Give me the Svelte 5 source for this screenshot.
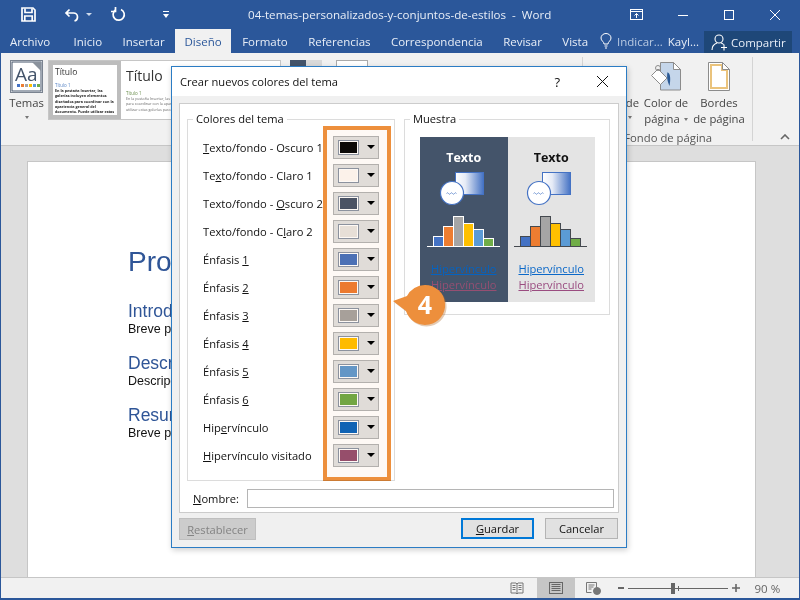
<script>
  const tabs = ['Archivo', 'Inicio', 'Insertar', 'Diseño', 'Formato', 'Referencias', 'Correspondencia', 'Revisar', 'Vista'];
  const rows = [
    { a: '', u: 'T', b: 'exto/fondo - Oscuro 1', c: '#0c0a08' },
    { a: 'Te', u: 'x', b: 'to/fondo - Claro 1', c: '#fdf8f4' },
    { a: 'Texto/fondo - ', u: 'O', b: 'scuro 2', c: '#4b5568' },
    { a: 'Texto/fondo - C', u: 'l', b: 'aro 2', c: '#e8e5e0' },
    { a: 'Énfasis ', u: '1', b: '', c: '#4b73bd' },
    { a: 'Énfasis ', u: '2', b: '', c: '#ed7d31' },
    { a: 'Énfasis ', u: '3', b: '', c: '#a8a4a0' },
    { a: 'Énfasis ', u: '4', b: '', c: '#ffc000' },
    { a: 'Énfasis ', u: '5', b: '', c: '#639ace' },
    { a: 'Énfasis ', u: '6', b: '', c: '#72aa45' },
    { a: 'Hip', u: 'e', b: 'rvínculo', c: '#0f64bc' },
    { a: '', u: 'H', b: 'ipervínculo visitado', c: '#97506f' }
  ];
  const bars = [
    { h: 10, c: '#4472c4' },
    { h: 20, c: '#ed7d31' },
    { h: 30, c: '#a5a5a5' },
    { h: 23, c: '#ffc000' },
    { h: 17, c: '#5b9bd5' },
    { h: 8, c: '#70ad47' }
  ];
  const panes = [
    { cls: 'dark', stroke: '#ffffff', id: 'g1' },
    { cls: 'light', stroke: '#44494f', id: 'g2' }
  ];
  const bodyText = 'En la pestaña Insertar, las galerías incluyen elementos diseñados para coordinar con la apariencia general del documento. Puede utilizar estas galerías para insertar tablas, encabezados, pies de';
</script>

<div class="word">
  <header class="titlebar">
    <div class="qat">
      <svg width="15" height="15" viewBox="0 0 15 15" fill="none" stroke="#fff" stroke-width="1.7"><path d="M1 1h11l2 2v11H1z"/><path d="M4 1.500v4h7v-4M3.800 14V9h7.400v5"/></svg>
      <svg class="undo" width="16" height="14" viewBox="0 0 16 14" fill="none" stroke="#fff" stroke-width="1.7"><path d="M5.500 1.500L2 5l3.500 3.500M2.500 5h7a4 4 0 0 1 4 4c0 2-1 3.500-3 4"/></svg>
      <i class="caret"></i>
      <svg class="redo" width="15" height="15" viewBox="0 0 15 15" fill="none" stroke="#fff" stroke-width="1.700"><path d="M4.500 3a5.600 5.600 0 1 0 5.500-.5"/><path d="M4.500 0v4.500H0"/></svg>
      <svg class="custom" width="7" height="8" viewBox="0 0 7 8" fill="#fff"><rect width="6" height="1" y="0"/><path d="M0 3h6L3 7z"/></svg>
    </div>
    <div class="doc-title">04-temas-personalizados-y-conjuntos-de-estilos&nbsp; -&nbsp; Word</div>
    <div class="winbtns">
      <svg class="opts" width="14" height="12" viewBox="0 0 14 12" fill="none" stroke="#fff"><rect x=".5" y=".5" width="12" height="10"/><path d="M.5 2.500h12M6.500 9V4.500M4.500 6.500l2-2 2 2"/></svg>
      <svg width="10" height="10" viewBox="0 0 10 10" stroke="#fff"><path d="M0 5.500h10"/></svg>
      <svg width="10" height="10" viewBox="0 0 10 10" fill="none" stroke="#fff"><rect x=".5" y=".5" width="9" height="9"/></svg>
      <svg width="10" height="10" viewBox="0 0 10 10" stroke="#fff"><path d="M0 0l10 10M10 0L0 10"/></svg>
    </div>
  </header>

  <nav class="tabs">
    {#each tabs as t}
      <span class="tab" class:active={t === 'Diseño'}>{t}</span>
    {/each}
    <span class="tell">
      <svg width="12" height="16" viewBox="0 0 12 16" fill="none" stroke="#fff"><path d="M4 11C4 8.500 1 8 1 5a5 4.500 0 0 1 10 0c0 3-3 3.500-3 6zM4.500 13h3M5 15h2"/></svg>
      <span>Indicar...</span>
    </span>
    <span class="user">Kayl...</span>
    <span class="share">
      <svg width="17" height="17" viewBox="0 0 17 17" fill="none" stroke="#fff" stroke-width="1.100"><circle cx="8" cy="5" r="4"/><path d="M1 16c0-4 2-6 5-7M10 9c1 .3 2 .8 2.500 1.500M10 13.500h6M13 10.500v6"/></svg>
      Compartir
    </span>
  </nav>

  <section class="ribbon">
    <div class="themes">
      <svg width="33" height="33" viewBox="0 0 33 33">
        <rect x=".5" y=".5" width="32" height="32" fill="#fff" stroke="#7a8390"/>
        <rect x="2" y="2" width="29" height="29" fill="#fff" stroke="#44546a"/>
        <path d="M22 2h9v9z" fill="#8a929c"/>
        <text x="5" y="21" class="aa">Aa</text>
        <rect x="7" y="24" width="3" height="3" fill="#4472c4"/><rect x="11" y="24" width="3" height="3" fill="#ed7d31"/><rect x="15" y="24" width="3" height="3" fill="#a5a5a5"/><rect x="19" y="24" width="3" height="3" fill="#ffc000"/><rect x="23" y="24" width="3" height="3" fill="#5b9bd5"/><rect x="27" y="24" width="3" height="3" fill="#70ad47"/>
      </svg>
      <span>Temas</span>
      <i class="mini-caret"></i>
    </div>
    <div class="gallery">
      <div class="thumb selected">
        <div class="t-title">Título</div>
        <div class="t-h blue">Título 1</div>
        <div class="t-body">{bodyText}</div>
      </div>
      <div class="thumb plain">
        <div class="t-title big">Título</div>
        <div class="t-h green">Título 1</div>
        <div class="t-body gray">{bodyText}</div>
      </div>
    </div>
    <div class="peek">
      <i class="sw"><b></b><b></b></i>
      <i class="bx"></i>
    </div>
    <div class="page-bg">
      <div class="sep"></div>
      <div class="group">
        <div class="pg-btns">
          <div class="pg-btn de">
            <span>de</span>
            <i class="mini-caret"></i>
          </div>
          <div class="pg-btn color">
            <svg width="32" height="29" viewBox="0 0 32 29">
              <path d="M10.500 .5h13l7 7v20.500h-20z" fill="#c5d6ea" stroke="#8c8c8c"/>
              <path d="M23.500 .5v7h7z" fill="#fff" stroke="#8c8c8c"/>
              <path d="M8 7l9 9-6.500 6.500-9-9z" fill="#fff" stroke="#8c8c8c"/>
              <path d="M17 10c4 1 3.500 8 2.500 14-2-5-3-8-2-14" fill="#2b5a95"/>
              <circle cx="8" cy="6" r="2.500" fill="none" stroke="#8c8c8c"/>
            </svg>
            <span>Color de</span>
            <span>página <i class="mini-caret inline"></i></span>
          </div>
          <div class="pg-btn borders">
            <svg width="22" height="29" viewBox="0 0 22 29">
              <path d="M.5 .5h14l7 7v21H.5z" fill="#fff" stroke="#8c8c8c"/>
              <path d="M3 3h11v5h5v18H3z" fill="none" stroke="#eac37c" stroke-width="2"/>
              <path d="M14.500 .5v7h7z" fill="#fff" stroke="#8c8c8c"/>
            </svg>
            <span>Bordes</span>
            <span>de página</span>
          </div>
        </div>
        <div class="group-name">Fondo de página</div>
      </div>
      <div class="sep right"></div>
      <svg class="collapse" width="10" height="6" viewBox="0 0 10 6" fill="none" stroke="#666" stroke-width="1.600"><path d="M1 5l4-4 4 4"/></svg>
    </div>
  </section>

  <main class="canvas">
    <article class="page">
      <h1>Propuesta</h1>
      <h2>Introducción</h2>
      <p>Breve párrafo</p>
      <h2>Descripción</h2>
      <p>Descripción</p>
      <h2>Resumen</h2>
      <p>Breve párrafo</p>
    </article>
  </main>

  <footer class="status">
    <svg width="14" height="13" viewBox="0 0 14 13" fill="none" stroke="#777"><path d="M1 1h5l1 1 1-1h5v10H8l-1 1-1-1H1zM7 2v9M2.500 3.500h3M2.500 5.500h3M2.500 7.500h3M8.500 3.500h3M8.500 5.500h3M8.500 7.500h3"/></svg>
    <span class="view-active">
      <svg width="14" height="12" viewBox="0 0 14 12" fill="none" stroke="#666"><rect x=".5" y=".5" width="13" height="11"/><path d="M2.500 2.500h9M2.500 4.500h9M2.500 6.500h9M2.500 8.500h9"/></svg>
    </span>
    <svg class="web" width="15" height="13" viewBox="0 0 15 13" fill="none" stroke="#777"><path d="M.5.5h10v5M.5.500v10h5M2.500 3h6M2.500 5h5M2.500 7h3"/><circle cx="11" cy="9" r="3.500" fill="#777"/></svg>
    <span class="zoom">
      <i class="minus"></i>
      <span class="track"><i class="thumb-z"></i><i class="tick"></i></span>
      <svg width="8" height="8" viewBox="0 0 8 8" stroke="#666" stroke-width="1.600"><path d="M0 4h8M4 0v8"/></svg>
    </span>
    <span class="pct">90 %</span>
  </footer>

  <div class="dialog">
    <div class="dlg-title">
      <span>Crear nuevos colores del tema</span>
      <span class="help">?</span>
      <svg width="11" height="11" viewBox="0 0 11 11" stroke="#111"><path d="M0 0l11 11M11 0L0 11"/></svg>
    </div>
    <div class="dlg-body">
      <div class="panel">
        <div class="fields">
          <fieldset class="colors">
            <legend>Colores del tema</legend>
            {#each rows as r}
              <div class="row">
                <span class="lbl">{r.a}<u>{r.u}</u>{r.b}</span>
                <span class="pick"><i class="chip" style="background:{r.c}"></i><i class="arrow"></i></span>
              </div>
            {/each}
          </fieldset>
          <fieldset class="sample">
            <legend>Muestra</legend>
            <div class="preview">
              {#each panes as p}
                <div class="pane {p.cls}">
                  <strong>Texto</strong>
                  <svg class="shapes" width="64" height="34" viewBox="0 0 64 34">
                    <defs>
                      <linearGradient id={p.id}><stop offset="0" stop-color="#fff"/><stop offset=".35" stop-color="#e6ebf6"/><stop offset="1" stop-color="#4472c4"/></linearGradient>
                    </defs>
                    <rect x="20.500" y=".5" width="28" height="22" fill="url(#{p.id})" stroke="#4472c4"/>
                    <circle cx="17" cy="21" r="11.500" fill="#fff" stroke="#4472c4" stroke-width="1.200"/>
                    <path d="M11.500 21.500q1-1.500 2 0t2 0 2 0 2 0 2 0" fill="none" stroke="#4472c4" stroke-width=".7"/>
                  </svg>
                  <svg class="chart" width="74" height="33" viewBox="0 0 74 33">
                    {#each bars as b, i}
                      <rect x={6 + i * 10 + .5} y={31.500 - b.h} width="10" height={b.h} fill={b.c} stroke={p.stroke}/>
                    {/each}
                    <path d="M0 31.500h73" stroke={p.stroke}/>
                  </svg>
                  <a class="link">Hipervínculo</a>
                  <a class="link visited">Hipervínculo</a>
                </div>
              {/each}
            </div>
          </fieldset>
        </div>
        <div class="name-row">
          <label for="nm"><u>N</u>ombre:</label>
          <input id="nm" type="text" />
        </div>
      </div>
      <div class="actions">
        <button class="disabled"><u>R</u>establecer</button>
        <button class="primary"><u>G</u>uardar</button>
        <button>Cancelar</button>
      </div>
    </div>
  </div>

  <div class="highlight"></div>
  <svg class="callout" width="60" height="52" viewBox="0 0 60 52">
    <path d="M33 3a20 20 0 1 1-19 26L1 19l14-5A20 20 0 0 1 33 3z" fill="#b06a2c" opacity=".35" transform="translate(1.500 1.500)"/>
    <path d="M33 3a20 20 0 1 1-19 26L1 19l14-5A20 20 0 0 1 33 3z" fill="#ed8f3c"/>
    <text x="33" y="32" class="num">4</text>
  </svg>
</div>

<style>
  :global(body) { margin: 0; }
  .word {
    position: relative;
    width: 800px;
    height: 600px;
    overflow: hidden;
    display: flex;
    flex-direction: column;
    box-sizing: border-box;
    border: solid #2b579a;
    border-width: 0 1px 2px;
    font-family: "Open Sans", "Noto Sans", sans-serif;
    font-size: 11.500px;
    color: #222;
    background: #dedede;
  }
  .titlebar {
    flex: none;
    height: 29px;
    margin: 0 -1px;
    background: #2b579a;
    color: #e8eef7;
    display: flex;
    align-items: center;
    position: relative;
  }
  .qat { display: flex; align-items: center; padding-left: 21px; }
  .undo { margin-left: 28px; }
  .caret { width: 0; height: 0; border: 3px solid transparent; border-top: 3px solid #cfdbec; border-bottom: 0; margin-left: 6px; }
  .redo { margin-left: 19px; }
  .custom { margin-left: 37px; }
  .doc-title {
    position: absolute;
    left: 248px;
    font-size: 11.600px;
    white-space: nowrap;
  }
  .winbtns {
    margin-left: auto;
    display: flex;
    align-items: center;
    gap: 36px;
    padding-right: 20px;
  }
  .opts { margin-right: -2px; }
  .tabs {
    flex: none;
    height: 24px;
    margin: 0 -1px;
    background: #2b579a;
    color: #e8eef7;
    display: flex;
    align-items: flex-end;
    font-size: 11.500px;
  }
  .tab {
    height: 24px;
    line-height: 25px;
    padding: 0 10px;
    margin-right: 0.4px;
    white-space: nowrap;
  }
  .tab:first-child { margin-right: 3.500px; }
  .tab.active {
    padding: 0 9.500px;
    margin-right: 1px;
    background: #f1f1f1;
    color: #2b579a;
  }
  .tell { display: flex; align-items: center; gap: 5px; margin-left: auto; height: 24px; color: #b8c9e2; }
  .user { margin-left: 5px; height: 24px; line-height: 25px; }
  .share {
    margin: 0 8px 0 5px;
    width: 88px;
    height: 22px;
    background: #1e4778;
    display: flex;
    align-items: center;
    gap: 3px;
    padding-left: 7px;
    box-sizing: border-box;
    white-space: nowrap;
  }
  .ribbon {
    flex: none;
    height: 93px;
    margin: 0 -1px;
    box-sizing: border-box;
    background: #f1f1f1;
    border-bottom: 1px solid #c6c6c6;
    display: flex;
    padding-top: 7px;
    position: relative;
    color: #444;
  }
  .themes {
    width: 53px;
    display: flex;
    flex-direction: column;
    align-items: center;
    font-size: 11.300px;
  }
  .themes svg { margin-left: -1px; }
  .themes span { margin-top: 2px; }
  .aa { font: 19px "Open Sans", sans-serif; fill: #44546a; }
  .mini-caret {
    display: block;
    width: 0;
    height: 0;
    border: 2.500px solid transparent;
    border-top: 3px solid #777;
    border-bottom: 0;
    margin-top: 6px;
  }
  .mini-caret.inline { display: inline-block; vertical-align: middle; margin: 0 0 0 1px; }
  .gallery {
    width: 233px;
    height: 60px;
    margin-left: -5px;
    box-sizing: border-box;
    border: 1px solid #c6c6c6;
    background: #fff;
    display: flex;
    overflow: hidden;
  }
  .thumb { width: 72px; height: 58px; box-sizing: border-box; overflow: hidden; background: #fff; flex: none; }
  .thumb.selected { border: 4px solid #bdbdbd; padding: 1px 2px; margin-right: 3px; }
  .thumb.plain { width: 120px; padding: 6px 2px; }
  .t-title { font-size: 8.500px; color: #333; line-height: 12px; }
  .t-title.big { font-size: 14px; line-height: 18px; }
  .t-h { font-size: 4.500px; line-height: 6px; margin-top: 4px; }
  .blue { color: #5a86c5; }
  .green { color: #6b8f4e; margin-top: 5px; }
  .t-body { font-size: 3.700px; line-height: 5.300px; color: #222; font-weight: 700; }
  .t-body.gray { color: #666; font-weight: 400; }
  .peek { display: flex; gap: 14px; margin-left: 9px; height: 6px; }
  .sw { display: flex; width: 32px; height: 6px; }
  .sw b:first-child { flex: 1; background: #44546a; }
  .sw b:last-child { flex: 1; background: #d9d9d9; }
  .bx { width: 30px; height: 6px; border: 1px solid #aaa; background: #fff; }
  .page-bg {
    position: absolute;
    left: 582px;
    top: 4px;
    right: 0;
    bottom: 4px;
    display: flex;
  }
  .sep { width: 1px; background: #d4d4d4; flex: none; }
  .sep.right { margin-left: auto; margin-right: 47px; }
  .group { width: 169px; display: flex; flex-direction: column; font-size: 11.300px; }
  .pg-btns { display: flex; flex: none; height: 73px; padding-top: 5px; box-sizing: border-box; }
  .pg-btn { display: flex; flex-direction: column; align-items: center; line-height: 16px; white-space: nowrap; flex: none; }
  .pg-btn svg { height: 29px; margin-bottom: 4px; }
  .pg-btn.de { width: 56px; padding-top: 33px; box-sizing: border-box; align-items: flex-end; }
  .pg-btn.de .mini-caret { margin: 5px 7px 0 0; }
  .pg-btn.color { width: 52px; margin-left: 1px; }
  .pg-btn.borders { width: 54px; margin-left: 0; }
  .group-name { color: #555; text-align: right; padding-right: 40px; white-space: nowrap; line-height: 16px; }
  .collapse { position: absolute; right: 10px; bottom: 1px; }
  .canvas {
    flex: 1;
    min-height: 0;
    padding: 15px 43px 0 26px;
    overflow: hidden;
  }
  .page {
    height: 100%;
    box-sizing: border-box;
    background: #fff;
    border: 1px solid #c6c6c6;
    border-bottom: 0;
    padding: 81px 0 0 100px;
    font-family: "Liberation Sans", Arial, sans-serif;
  }
  .page h1 { margin: 0 0 20px; font-size: 28px; line-height: 38px; font-weight: 400; color: #2f5597; }
  .page h2 { margin: 0; font-size: 17.500px; line-height: 21px; font-weight: 400; color: #2f5597; }
  .page p { margin: 0 0 16px; font-size: 12.500px; line-height: 15px; color: #111; }
  .status {
    flex: none;
    height: 21px;
    box-sizing: border-box;
    background: #f1f1f1;
    border-top: 1px solid #c6c6c6;
    display: flex;
    align-items: center;
    justify-content: flex-end;
    padding-right: 20px;
    color: #666;
  }
  .view-active { width: 38px; height: 20px; background: #c6c6c6; display: flex; align-items: center; justify-content: center; margin-left: 13px; }
  .web { margin-left: 11px; }
  .zoom { display: flex; align-items: center; margin-left: 17px; }
  .minus { width: 6px; height: 2px; background: #666; }
  .track { position: relative; width: 100px; height: 1px; background: #666; margin: 0 4px 0 4px; }
  .thumb-z { position: absolute; left: 43px; top: -5px; width: 4px; height: 11px; background: #666; }
  .tick { position: absolute; left: 50px; top: -2px; width: 1px; height: 5px; background: #666; }
  .pct { margin-left: 15px; width: 24.500px; font-size: 11.500px; white-space: nowrap; }

  .dialog {
    position: absolute;
    left: 170px;
    top: 66px;
    width: 456px;
    height: 482px;
    box-sizing: border-box;
    border: 1px solid #2b7cc4;
    background: #f0f0f0;
    box-shadow: 1px 2px 6px rgba(0, 0, 0, 0.2);
    display: flex;
    flex-direction: column;
    color: #111;
    font-size: 11.150px;
  }
  .dlg-title {
    flex: none;
    height: 29px;
    background: #fff;
    display: flex;
    align-items: center;
    padding: 0 18px 0 8px;
  }
  .dlg-title span:first-child { flex: 1; }
  .help { margin-right: 37px; font-size: 13px; }
  .dlg-body { flex: 1; padding: 7px 7px 0; display: flex; flex-direction: column; }
  .panel {
    height: 410px;
    box-sizing: border-box;
    background: #fff;
    border: 1px solid #ccc;
    padding: 14px 7px 0 7px;
  }
  .fields { display: flex; align-items: flex-start; gap: 9px; }
  fieldset {
    margin: 0;
    padding: 0;
    box-sizing: border-box;
    border: 1px solid #dcdcdc;
    min-width: 0;
  }
  legend { padding: 0 3px; line-height: 16px; height: 16px; }
  .colors { width: 208px; height: 370px; padding: 6px 0 0 15px; margin-top: -7px; }
  .colors legend { margin-left: -10px; }
  .row { display: flex; align-items: center; height: 28px; position: relative; }
  .lbl { width: 130px; flex: none; white-space: nowrap; }
  .pick {
    width: 46px;
    height: 23px;
    box-sizing: border-box;
    background: #e1e2e1;
    border: 1px solid #b4b4b4;
    display: flex;
    align-items: center;
    padding-left: 4px;
  }
  .chip { height: 15px; border: 1px solid #8d96a5; box-shadow: inset 0 0 0 1px #fff; box-sizing: border-box; width: 21px; }
  .arrow { width: 0; height: 0; border: 4px solid transparent; border-top: 4px solid #000; border-bottom: 0; margin-left: 8px; }
  .sample { width: 206px; height: 204px; padding: 10px 15px 0; margin-top: -7px; }
  .sample legend { margin-left: -10px; }
  .preview { display: flex; height: 165px; width: 175px; }
  .pane { flex: 1; display: flex; flex-direction: column; align-items: center; padding-top: 12px; box-sizing: border-box; }
  .pane.dark { background: #44546a; color: #fff; }
  .pane.light { background: #e4e4e4; color: #111; }
  .pane strong { font-size: 12.500px; line-height: 17px; }
  .shapes { margin: 6px 0 0 6px; flex: none; }
  .chart { margin-top: 9px; flex: none; }
  .link { color: #0563c1; text-decoration: underline; margin-top: 13px; line-height: 16px; font-size: 11.150px; }
  .link.visited { color: #954f72; margin-top: 0; }
  .pane.light .link { color: #0b68c8; }
  .pane.light .link.visited { color: #9a4c80; }
  .name-row { display: flex; align-items: center; margin: 8px -5px 0 0; padding-left: 6px; }
  .name-row label { width: 54px; flex: none; }
  input {
    flex: none;
    width: 367px;
    height: 19px;
    box-sizing: border-box;
    border: 1px solid #b5b5b5;
    margin: 0;
    background: #fff;
  }
  .actions { display: flex; padding: 5px 1px 0 0; }
  button {
    width: 73px;
    height: 21px;
    box-sizing: border-box;
    border: 1px solid #b4b4b4;
    background: #e1e1e1;
    font: inherit;
    color: #111;
    padding: 0;
  }
  .disabled { width: 77px; height: 22px; color: #838383; background: #ccc; border-color: #bfbfbf; margin-right: auto; }
  .primary { border: 2px solid #0078d7; margin-right: 11px; }

  .highlight {
    position: absolute;
    left: 322px;
    top: 126px;
    width: 68px;
    height: 355px;
    box-sizing: border-box;
    border: 4px solid #ed8f3c;
    background: rgba(237, 143, 60, 0.05);
    mix-blend-mode: multiply;
  }
  .callout { position: absolute; left: 391px; top: 282px; }
  .num { font: 700 25px "Open Sans", sans-serif; fill: #fff; text-anchor: middle; }
</style>
